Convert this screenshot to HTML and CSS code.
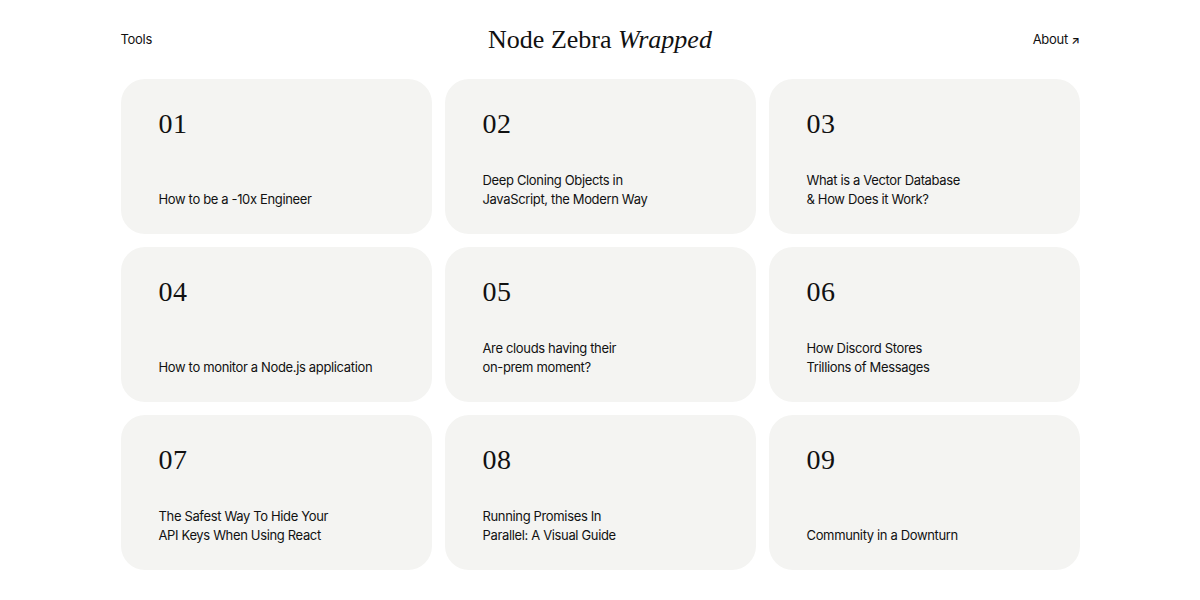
FILE: index.html
```html
<!DOCTYPE html>
<html lang="en">
<head>
<meta charset="utf-8">
<title>Node Zebra Wrapped</title>
<link rel="stylesheet" href="styles.css">
</head>
<body>
<div class="page">
  <header class="top">
    <a class="nav nav-left" href="#">Tools</a>
    <h1 class="brand">Node Zebra <em>Wrapped</em></h1>
    <a class="nav nav-right" href="#">About <span class="arrow">↗</span></a>
  </header>
  <main class="grid">
    <a class="card" href="#"><span class="num">01</span><span class="title">How to be a -10x Engineer</span></a>
    <a class="card" href="#"><span class="num">02</span><span class="title">Deep Cloning Objects in<br>JavaScript, the Modern Way</span></a>
    <a class="card" href="#"><span class="num">03</span><span class="title">What is a Vector Database<br>&amp; How Does it Work?</span></a>
    <a class="card" href="#"><span class="num">04</span><span class="title">How to monitor a Node.js application</span></a>
    <a class="card" href="#"><span class="num">05</span><span class="title">Are clouds having their<br>on-prem moment?</span></a>
    <a class="card" href="#"><span class="num">06</span><span class="title">How Discord Stores<br>Trillions of Messages</span></a>
    <a class="card" href="#"><span class="num">07</span><span class="title">The Safest Way To Hide Your<br>API Keys When Using React</span></a>
    <a class="card" href="#"><span class="num">08</span><span class="title">Running Promises In<br>Parallel: A Visual Guide</span></a>
    <a class="card" href="#"><span class="num">09</span><span class="title">Community in a Downturn</span></a>
  </main>
</div>
</body>
</html>
```

FILE: styles.css
```css
* { box-sizing: border-box; }
html, body { margin: 0; padding: 0; background: #ffffff; }
body {
  font-family: Inter, "Liberation Sans", Arial, sans-serif;
  color: #111111;
  -webkit-font-smoothing: antialiased;
}
a { color: inherit; text-decoration: none; }
.page {
  width: 959px;
  margin: 0 auto;
}
.top {
  display: grid;
  grid-template-columns: 1fr auto 1fr;
  align-items: center;
  height: 79px;
  padding-bottom: 2px;
}
.nav {
  font-size: 13px;
  letter-spacing: -0.3px;
}
.nav-left { justify-self: start; }
.nav-right { justify-self: end; }
.arrow { font-size: 11px; font-weight: 600; }
.brand {
  margin: 0;
  font-family: "Liberation Serif", "Times New Roman", serif;
  font-weight: 400;
  font-size: 26px;
  letter-spacing: 0;
  line-height: 1;
  padding-top: 2px;
}
.brand em { font-style: italic; }
.grid {
  display: grid;
  grid-template-columns: repeat(3, 1fr);
  gap: 13px;
}
.card {
  display: flex;
  flex-direction: column;
  justify-content: space-between;
  height: 155px;
  padding: 31px 38px 25px;
  background: #f4f4f2;
  border-radius: 24px;
}
.num {
  font-family: "Liberation Serif", "Times New Roman", serif;
  font-size: 28px;
  line-height: 1;
  letter-spacing: 0.5px;
}
.title {
  font-size: 13px;
  line-height: 19px;
  letter-spacing: -0.35px;
}
```
